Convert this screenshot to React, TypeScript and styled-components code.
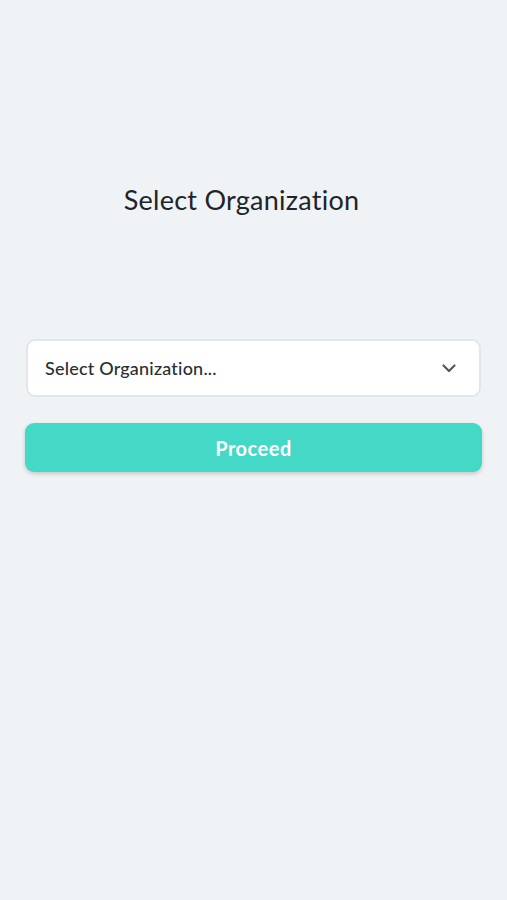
import React from "react";
import styled, { createGlobalStyle } from "styled-components";

const Global = createGlobalStyle`
  html, body { margin: 0; padding: 0; background: #eff3f6; }
  body { font-family: Lato, "Noto Sans", sans-serif; }
`;

const Page = styled.div`
  min-height: 900px;
  background: #eff3f6;
  display: flex;
  flex-direction: column;
  padding: 0 25px;
  box-sizing: border-box;
`;

const Title = styled.h1`
  margin: 182px 0 0;
  padding-right: 24px;
  font-size: 27px;
  line-height: 35px;
  font-weight: 400;
  color: #1f2428;
  text-align: center;
  letter-spacing: 0.25px;
`;

const Form = styled.div`
  margin-top: 122px;
  display: flex;
  flex-direction: column;
  gap: 26px;
`;

const SelectBox = styled.div`
  margin: 0 1px;
  height: 58px;
  box-sizing: border-box;
  background: #ffffff;
  border: 2px solid #e2e6ea;
  border-radius: 9px;
  display: flex;
  align-items: center;
  justify-content: space-between;
  padding: 0 22px 0 17px;
`;

const Placeholder = styled.span`
  font-size: 18px;
  font-weight: 500;
  color: #2a2e33;
  letter-spacing: 0.2px;
`;

const Button = styled.button`
  height: 49px;
  border: none;
  border-radius: 9px;
  background: #43d9c6;
  color: #ffffff;
  font-family: Lato, "Noto Sans", sans-serif;
  font-size: 20px;
  font-weight: 700;
  box-shadow: 0 2px 4px rgba(0, 0, 0, 0.18);
  letter-spacing: 0.5px;
`;

export default function App() {
  return (
    <>
      <Global />
      <Page>
        <Title>Select Organization</Title>
        <Form>
          <SelectBox>
            <Placeholder>Select Organization...</Placeholder>
            <svg width="16" height="16" viewBox="0 0 16 16" fill="none">
              <path d="M2.5 5.5 L8 11 L13.5 5.5" stroke="#55595e" strokeWidth="2.2" strokeLinecap="round" strokeLinejoin="round" />
            </svg>
          </SelectBox>
          <Button>Proceed</Button>
        </Form>
      </Page>
    </>
  );
}
